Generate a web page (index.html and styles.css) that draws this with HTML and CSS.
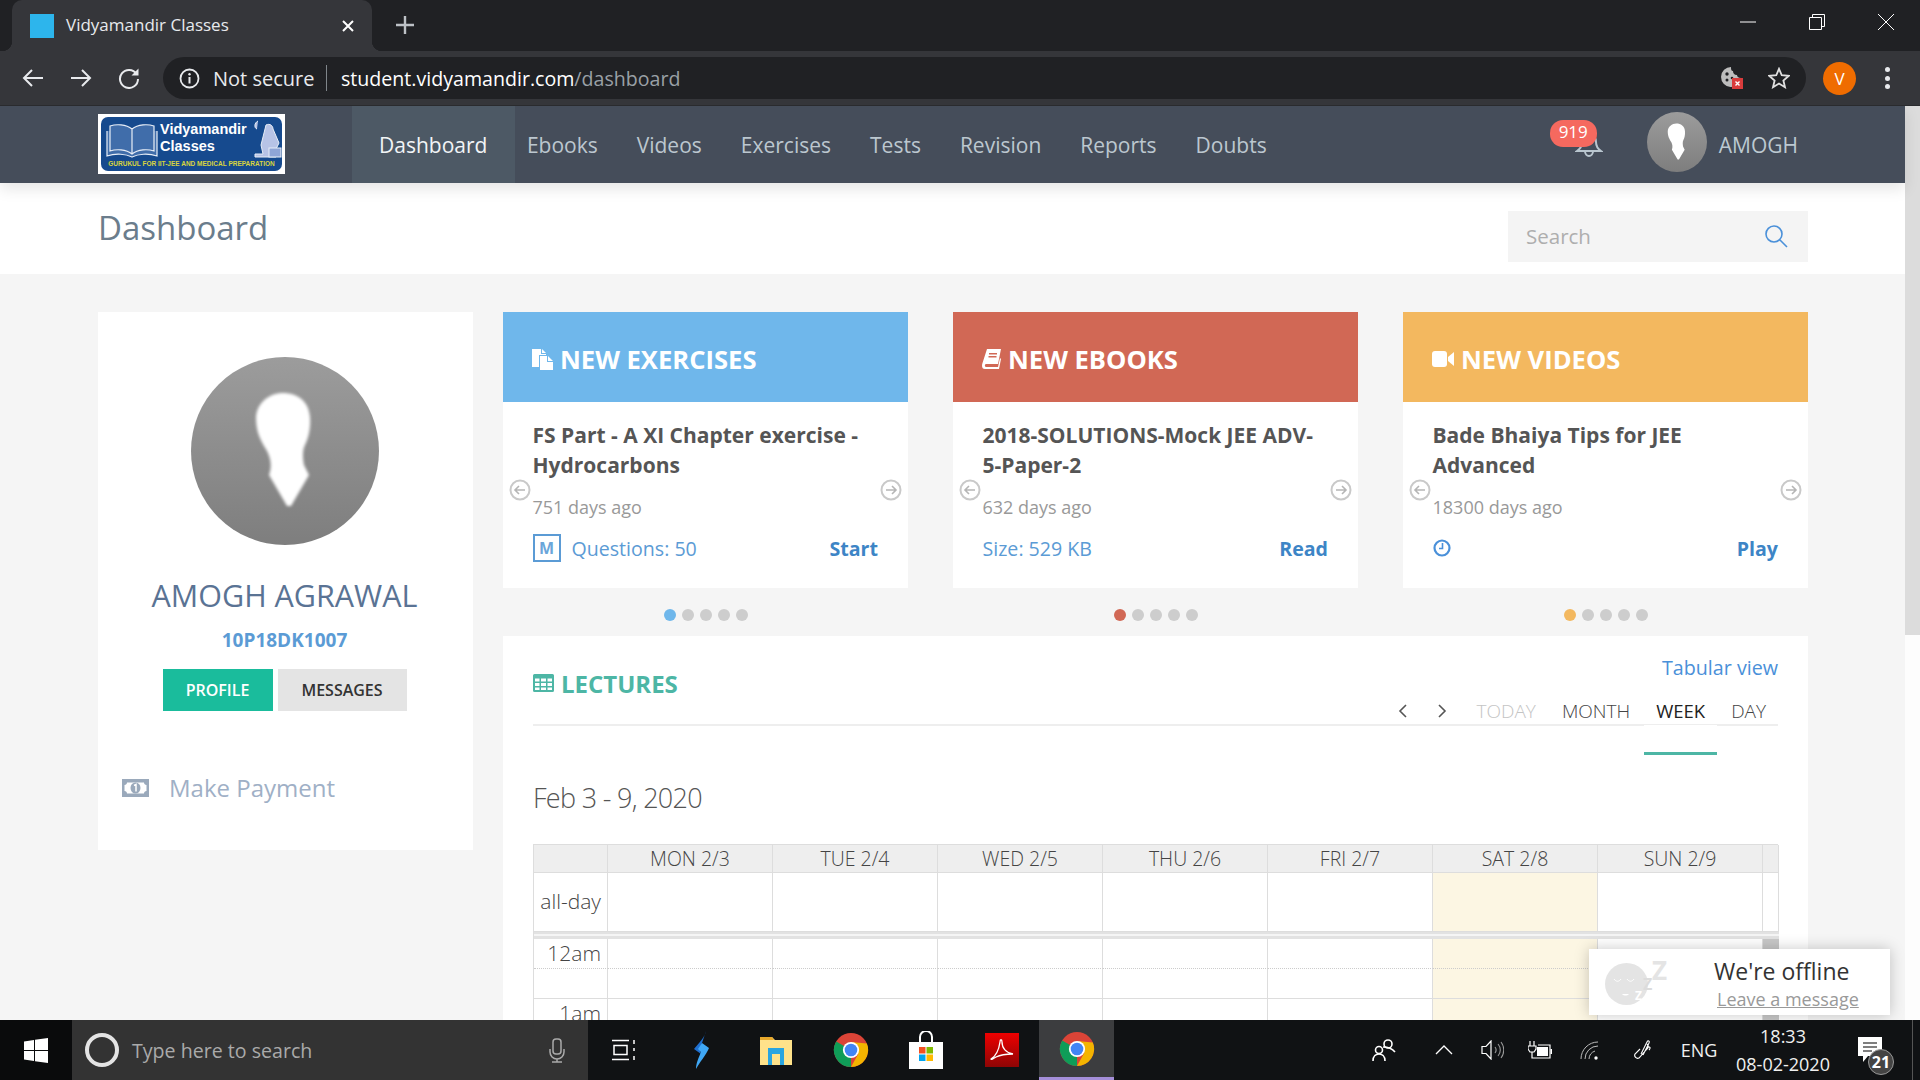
FILE: index.html
```html
<!DOCTYPE html>
<html lang="en">
<head>
<meta charset="utf-8">
<title>Vidyamandir Classes</title>
<link rel="stylesheet" href="styles.css">
</head>
<body>
<svg class="defs" width="0" height="0" aria-hidden="true">
  <symbol id="chrome" viewBox="0 0 40 40">
    <circle cx="20" cy="20" r="19" fill="#db4437"/>
    <path d="M20 20 L3.55 29.5 A19 19 0 0 0 20 39 Z" fill="#0f9d58"/>
    <path d="M3.55 10.5 A19 19 0 0 0 3.55 29.5 L13 31.5 L20 20 Z" fill="#0f9d58"/>
    <path d="M20 11 L37.6 12.8 A19 19 0 0 1 20 39 L28 24.5 Z" fill="#f4b400"/>
    <circle cx="20" cy="20" r="9" fill="#fff"/>
    <circle cx="20" cy="20" r="7" fill="#4285f4"/>
  </symbol>
  <symbol id="person" viewBox="0 0 188 188">
    <defs>
      <linearGradient id="pg" x1="0" y1="0" x2="0" y2="1"><stop offset="0" stop-color="#9c9c9c"/><stop offset="1" stop-color="#7e7e7e"/></linearGradient>
      <filter id="pb"><feGaussianBlur stdDeviation="1.4"/></filter>
    </defs>
    <circle cx="94" cy="94" r="94" fill="url(#pg)"/>
    <path filter="url(#pb)" fill="#fff" d="M92 36C106 36 118 44 119 60C120 72 117 82 114 88C111 94 112 102 113 108L118 118L100 149L96 149L78 118C81 110 80 102 76 94C70 84 65 76 65 60C66 46 78 36 92 36Z"/>
  </symbol>
  <symbol id="arrow-l" viewBox="0 0 22 22">
    <circle cx="11" cy="11" r="9.5" fill="#fff" stroke="#c9c9c9" stroke-width="2"/>
    <path d="M16 11H6M10 7l-4 4 4 4" fill="none" stroke="#b5b5b5" stroke-width="1.6"/>
  </symbol>
  <symbol id="arrow-r" viewBox="0 0 22 22">
    <circle cx="11" cy="11" r="9.5" fill="#fff" stroke="#c9c9c9" stroke-width="2"/>
    <path d="M6 11h10M12 7l4 4-4 4" fill="none" stroke="#b5b5b5" stroke-width="1.6"/>
  </symbol>
</svg>

<div class="screen">
  <div class="tabstrip">
    <div class="tab">
      <span class="favicon"></span>
      <span class="tab-title">Vidyamandir Classes</span>
      <svg class="tab-x" width="12" height="12" viewBox="0 0 12 12"><path d="M1 1l10 10M11 1L1 11" stroke="#fff" stroke-width="2"/></svg>
    </div>
    <svg class="tab-plus" width="18" height="18" viewBox="0 0 18 18"><path d="M9 0v18M0 9h18" stroke="#bdc1c6" stroke-width="2.4"/></svg>
    <div class="winctl">
      <span class="winbtn"><svg width="16" height="16" viewBox="0 0 16 16"><path d="M0 8h16" stroke="#fff" stroke-width="1"/></svg></span>
      <span class="winbtn"><svg width="16" height="16" viewBox="0 0 16 16"><path d="M.5 3.5h12v12H.5zM3.5 3.5V.5h12v12h-3" fill="none" stroke="#fff"/></svg></span>
      <span class="winbtn"><svg width="16" height="16" viewBox="0 0 16 16"><path d="M0 0l16 16M16 0L0 16" stroke="#fff" stroke-width="1"/></svg></span>
    </div>
  </div>

  <div class="toolbar">
    <span class="tool"><svg width="22" height="22" viewBox="0 0 22 22"><path d="M21 11H2M10 3l-8 8 8 8" fill="none" stroke="#e8eaed" stroke-width="2"/></svg></span>
    <span class="tool"><svg width="22" height="22" viewBox="0 0 22 22"><path d="M1 11h19M12 3l8 8-8 8" fill="none" stroke="#e8eaed" stroke-width="2"/></svg></span>
    <span class="tool"><svg width="22" height="22" viewBox="0 0 22 22"><path d="M18.5 7A9 9 0 1 0 20 12" fill="none" stroke="#e8eaed" stroke-width="2"/><path d="M20.5 1.5v7h-7z" fill="#e8eaed"/></svg></span>
    <div class="omnibox">
      <svg class="omni-info" width="21" height="21" viewBox="0 0 21 21"><circle cx="10.5" cy="10.5" r="9" fill="none" stroke="#e8eaed" stroke-width="1.8"/><path d="M10.5 9v6.5" stroke="#e8eaed" stroke-width="2"/><circle cx="10.5" cy="6.2" r="1.2" fill="#e8eaed"/></svg>
      <span class="omni-sec">Not secure</span>
      <span class="omni-sep"></span>
      <span class="omni-url">student.vidyamandir.com<span class="omni-path">/dashboard</span></span>
      <span class="omni-right">
        <svg width="22" height="24" viewBox="0 0 22 24"><path d="M10 1a10 10 0 1 0 10 11c-3 0-4-2-4-3-3 0-4-2-4-4-2 0-2-2-2-4z" fill="#bdbdbd"/><circle cx="6" cy="8" r="1.7" fill="#202124"/><circle cx="6" cy="14" r="1.5" fill="#202124"/><circle cx="11" cy="12" r="1.3" fill="#202124"/><rect x="11" y="12" width="11" height="11" fill="#d93c3c"/><path d="M14.5 15.5l4 4M18.5 15.5l-4 4" stroke="#fff" stroke-width="1.4"/></svg>
        <svg width="22" height="22" viewBox="0 0 24 24"><path d="M12 2l3 7 7.500.7-5.700 5 1.700 7.300L12 18l-6.500 4 1.700-7.300-5.700-5L9 9z" fill="none" stroke="#e0e0e0" stroke-width="2"/></svg>
      </span>
    </div>
    <span class="profile-v">V</span>
    <span class="menu-dots"><i></i><i></i><i></i></span>
  </div>

  <div class="viewport">
    <div class="page">
      <nav class="nav">
        <div class="logo">
          <div class="logo-in">
            <svg class="logo-book" width="52" height="36" viewBox="0 0 52 36"><path d="M26 6C20 1 10 1 4 3V28C10 26 20 26 26 31C32 26 42 26 48 28V3C42 1 32 1 26 6ZM26 6V31M1 8V33C10 30 20 31 26 34C32 31 42 30 51 33V8" fill="#5d86bd" fill-opacity=".6" stroke="#e8eef7" stroke-width="1.2"/></svg>
            <div class="logo-words"><span>Vidyamandir</span><span>Classes</span></div>
            <svg class="logo-man" width="30" height="40" viewBox="0 0 30 40"><path d="M6 2C2 4 2 9 5 10M14 6c4-2 7 1 7 4l6 14-3 6v8H3v-3h8l-2-9z" fill="#b7c3e6" stroke="#e8eef7"/><rect x="17" y="29" width="12" height="9" fill="#8fa5d6" stroke="#e8eef7"/></svg>
            <div class="logo-tag">GURUKUL FOR IIT-JEE AND MEDICAL PREPARATION</div>
          </div>
        </div>
        <a class="nav-item active">Dashboard</a>
        <a class="nav-item after-active">Ebooks</a>
        <a class="nav-item">Videos</a>
        <a class="nav-item">Exercises</a>
        <a class="nav-item">Tests</a>
        <a class="nav-item">Revision</a>
        <a class="nav-item">Reports</a>
        <a class="nav-item">Doubts</a>
        <div class="nav-user">
          <div class="bell">
            <svg width="28" height="24" viewBox="0 0 28 24"><path d="M14 1c5 0 7 4 7 8 0 5 2 7 5 9H2c3-2 5-4 5-9 0-4 2-8 7-8zM10 18c0 3 2 5 4 5s4-2 4-5" fill="none" stroke="#b9c6cf" stroke-width="2"/></svg>
            <span class="badge">919</span>
          </div>
          <svg class="nav-avatar" width="60" height="60"><use href="#person"/></svg>
          <span class="nav-name">AMOGH</span>
        </div>
      </nav>

      <header class="titlebar">
        <h1 class="page-title">Dashboard</h1>
        <div class="search">
          <span>Search</span>
          <svg width="24" height="24" viewBox="0 0 24 24"><circle cx="10" cy="10" r="8" fill="none" stroke="#4a90d9" stroke-width="1.6"/><path d="M16 16l7 7" stroke="#4a90d9" stroke-width="1.6"/></svg>
        </div>
      </header>

      <div class="content">
        <aside class="profile">
          <svg class="avatar" width="188" height="188"><use href="#person"/></svg>
          <div class="name">AMOGH AGRAWAL</div>
          <div class="roll">10P18DK1007</div>
          <div class="btns"><a class="btn btn-green">PROFILE</a><a class="btn btn-grey">MESSAGES</a></div>
          <div class="pay">
            <svg width="27" height="18" viewBox="0 0 27 18"><path fill-rule="evenodd" d="M0 0h27v18H0zM5 3.500C5 5 4 6 2.500 6v6C4 12 5 13 5 14.500h17c0-1.500 1-2.500 2.500-2.500V6C23 6 22 5 22 3.500z" fill="#9aa9bb"/><ellipse cx="13.500" cy="9" rx="5" ry="5.500" fill="#9aa9bb"/><path d="M12 6.500l2-1v7" fill="none" stroke="#fff" stroke-width="1.500"/></svg>
            <span>Make Payment</span>
          </div>
        </aside>

        <main class="main">
          <div class="cards">
            <section class="slider">
              <div class="card">
                <div class="card-head blue">
                  <svg width="21" height="22" viewBox="0 0 21 22"><path d="M0 1h9v5h5v1H7v12H0zM10 1l4 4h-4zM8 8h7v6h6v8H8zM16 8l5 5h-5z" fill="#fff"/></svg>
                  <span>NEW EXERCISES</span>
                </div>
                <div class="card-body">
                  <h3>FS Part - A XI Chapter exercise - Hydrocarbons</h3>
                  <p class="age">751 days ago</p>
                  <div class="card-foot">
                    <span class="foot-left"><span class="mbox">M</span>Questions: 50</span>
                    <a class="action">Start</a>
                  </div>
                  <svg class="arr arr-l" width="22" height="22"><use href="#arrow-l"/></svg>
                  <svg class="arr arr-r" width="22" height="22"><use href="#arrow-r"/></svg>
                </div>
              </div>
              <div class="dots dots-blue"><i></i><i></i><i></i><i></i><i></i></div>
            </section>

            <section class="slider">
              <div class="card">
                <div class="card-head red">
                  <svg width="19" height="20" viewBox="0 0 19 20"><path d="M5 0h14l-3 15H4c-1.500 0-1.500 3 0 3h12l2-9 1 1-2 10H3C0 20-.5 17 .5 14zM7 4v1.500h8V4zM6.500 7v1.500h8V7z" fill="#fff" fill-rule="evenodd"/></svg>
                  <span>NEW EBOOKS</span>
                </div>
                <div class="card-body">
                  <h3>2018-SOLUTIONS-Mock JEE ADV-5-Paper-2</h3>
                  <p class="age">632 days ago</p>
                  <div class="card-foot">
                    <span class="foot-left">Size: 529 KB</span>
                    <a class="action">Read</a>
                  </div>
                  <svg class="arr arr-l" width="22" height="22"><use href="#arrow-l"/></svg>
                  <svg class="arr arr-r" width="22" height="22"><use href="#arrow-r"/></svg>
                </div>
              </div>
              <div class="dots dots-red"><i></i><i></i><i></i><i></i><i></i></div>
            </section>

            <section class="slider">
              <div class="card">
                <div class="card-head amber">
                  <svg width="22" height="16" viewBox="0 0 22 16"><rect width="15" height="16" rx="3" fill="#fff"/><path d="M16 6l6-5v14l-6-5z" fill="#fff"/></svg>
                  <span>NEW VIDEOS</span>
                </div>
                <div class="card-body">
                  <h3>Bade Bhaiya Tips for JEE Advanced</h3>
                  <p class="age">18300 days ago</p>
                  <div class="card-foot">
                    <span class="foot-left"><svg width="18" height="18" viewBox="0 0 18 18"><circle cx="9" cy="9" r="7.500" fill="none" stroke="#4a90d9" stroke-width="2.200"/><path d="M9.500 4v5.500H6" fill="none" stroke="#4a90d9" stroke-width="1.600"/></svg></span>
                    <a class="action">Play</a>
                  </div>
                  <svg class="arr arr-l" width="22" height="22"><use href="#arrow-l"/></svg>
                  <svg class="arr arr-r" width="22" height="22"><use href="#arrow-r"/></svg>
                </div>
              </div>
              <div class="dots dots-amber"><i></i><i></i><i></i><i></i><i></i></div>
            </section>
          </div>

          <section class="lectures">
            <div class="lect-head">
              <div class="lect-title">
                <svg width="21" height="18" viewBox="0 0 21 18"><path fill-rule="evenodd" d="M1.500 0h18A1.500 1.500 0 0 1 21 1.500v15a1.500 1.500 0 0 1-1.500 1.500h-18A1.500 1.500 0 0 1 0 16.500v-15A1.500 1.500 0 0 1 1.500 0zM2 4.500v3h4.500v-3zM8 4.500v3h5v-3zM14.500 4.500v3H19v-3zM2 9v3h4.500V9zM8 9v3h5V9zM14.500 9v3H19V9zM2 13.500V16h4.500v-2.500zM8 13.500V16h5v-2.500zM14.500 13.500V16H19v-2.500z" fill="#4db6a5"/></svg>
                <span>LECTURES</span>
              </div>
              <div class="lect-right">
                <a class="tabular">Tabular view</a>
                <div class="cal-tools">
                  <svg class="chev" width="10" height="14" viewBox="0 0 10 14"><path d="M8 1L2 7l6 6" fill="none" stroke="#555" stroke-width="1.600"/></svg>
                  <svg class="chev chev-next" width="10" height="14" viewBox="0 0 10 14"><path d="M2 1l6 6-6 6" fill="none" stroke="#555" stroke-width="1.600"/></svg>
                  <span class="ct today">TODAY</span>
                  <span class="ct month">MONTH</span>
                  <span class="ct week">WEEK</span>
                  <span class="ct day">DAY</span>
                </div>
              </div>
            </div>
            <h2 class="range">Feb 3 - 9, 2020</h2>
            <div class="cal">
              <div class="c hd"></div><div class="c hd">MON 2/3</div><div class="c hd">TUE 2/4</div><div class="c hd">WED 2/5</div><div class="c hd">THU 2/6</div><div class="c hd">FRI 2/7</div><div class="c hd">SAT 2/8</div><div class="c hd">SUN 2/9</div><div class="c hd"></div>
              <div class="c ad ax">all-day</div><div class="c ad"></div><div class="c ad"></div><div class="c ad"></div><div class="c ad"></div><div class="c ad"></div><div class="c ad sat"></div><div class="c ad"></div><div class="c ad gut"></div>
              <div class="divider"></div>
              <div class="c dot ax">12am</div><div class="c dot"></div><div class="c dot"></div><div class="c dot"></div><div class="c dot"></div><div class="c dot"></div><div class="c dot sat"></div><div class="c dot"></div><div class="c thumb"></div>
              <div class="c ax"></div><div class="c"></div><div class="c"></div><div class="c"></div><div class="c"></div><div class="c"></div><div class="c sat"></div><div class="c"></div><div class="c thumb"></div>
              <div class="c dot ax">1am</div><div class="c dot"></div><div class="c dot"></div><div class="c dot"></div><div class="c dot"></div><div class="c dot"></div><div class="c dot sat"></div><div class="c dot"></div><div class="c thumb"></div>
            </div>
          </section>
        </main>
      </div>
    </div>
    <div class="scrollbar"><div class="scroll-thumb"></div></div>

    <div class="chat">
      <svg class="chat-face" width="68" height="60" viewBox="0 0 68 60"><ellipse cx="21.500" cy="32" rx="21.500" ry="21" fill="#e4e4e4"/><path d="M9 27c2 3 5 3 7 0M22 27c2 3 5 3 7 0" fill="none" stroke="#fff"/><path d="M17 42c2 2 5 2 7 0z" fill="#fff"/><text x="47" y="27.500" class="zz1">Z</text><text x="38" y="38" class="zz2">Z</text><text x="30" y="48" class="zz3">Z</text></svg>
      <div class="chat-text">
        <div class="chat-t">We're offline</div>
        <a class="chat-l">Leave a message</a>
      </div>
    </div>
  </div>

  <div class="taskbar">
    <div class="start"><svg width="24" height="25" viewBox="0 0 24 25"><path d="M0 3.500L10 2v10H0zM11 1.800L24 0v12H11zM0 13h10v10L0 21.500zM11 13h13v12l-13-1.800z" fill="#fff"/></svg></div>
    <div class="tb-search">
      <span class="cortana"></span>
      <span class="tb-placeholder">Type here to search</span>
      <svg class="tb-mic" width="16" height="25" viewBox="0 0 16 25"><rect x="4" y="1" width="8" height="15" rx="3" fill="none" stroke="#aaa" stroke-width="1.500"/><path d="M1 11v3a7 7 0 0 0 14 0v-3M8 21v3M3 24h10" fill="none" stroke="#aaa" stroke-width="1.500"/></svg>
    </div>
    <span class="slot slot-view"><svg width="24" height="24" viewBox="0 0 24 24"><path d="M0 2.500h17M0 21.500h17M2 7.500h13v9H2zM22 2v4M22 10v3M22 18v4" fill="none" stroke="#fff" stroke-width="1.500"/></svg></span>
    <span class="slot"><svg width="20" height="38" viewBox="0 0 20 38"><path d="M15 0C14 6 8 12 3 18l7 5-1-5z" fill="#1f6fd0"/><path d="M11 12l7 5C15 24 8 32 5 38c0-6 3-12 5-17l-3-3z" fill="#3fa7f5"/></svg></span>
    <span class="slot"><svg width="32" height="30" viewBox="0 0 32 30"><path d="M0 2h12l3 3h17v25H0z" fill="#ffe28a"/><path d="M0 2h12l2 3H0z" fill="#e8a92c"/><path d="M8 13h16v17H8z" fill="#2aa5e0"/><path d="M12 19h8v11h-8z" fill="#ffe28a"/></svg></span>
    <span class="slot"><svg width="36" height="36"><use href="#chrome"/></svg></span>
    <span class="slot"><svg width="36" height="38" viewBox="0 0 36 38"><path d="M12 12V6a6 6 0 0 1 12 0v6" fill="none" stroke="#fff" stroke-width="2"/><path d="M1 11h34v27H1z" fill="#fff"/><path d="M11 16h6.500v6.500H11z" fill="#f25022"/><path d="M18.500 16H25v6.500h-6.500z" fill="#7fba00"/><path d="M11 23.500h6.500V30H11z" fill="#00a4ef"/><path d="M18.500 23.500H25V30h-6.500z" fill="#ffb900"/></svg></span>
    <span class="slot"><svg width="34" height="34" viewBox="0 0 34 34"><defs><linearGradient id="ar" x1="0" y1="0" x2="0" y2="1"><stop offset="0" stop-color="#ee0000"/><stop offset="1" stop-color="#8e0505"/></linearGradient></defs><rect width="34" height="34" fill="url(#ar)"/><path d="M6 26c5-3 8-10 9-17 0-3 2-3 2 0 0 6 4 11 11 12-6 0-13 1-17 3-3 2-5 3-5 2z" fill="none" stroke="#fff" stroke-width="1.300"/></svg></span>
    <span class="slot slot-active"><svg width="36" height="36"><use href="#chrome"/></svg></span>
    <div class="tray">
      <span class="ti ti-people"><svg width="24" height="24" viewBox="0 0 24 24"><circle cx="16" cy="6" r="4" fill="none" stroke="#fff" stroke-width="1.600"/><circle cx="7" cy="12" r="3.500" fill="none" stroke="#fff" stroke-width="1.600"/><path d="M11 9c1 0 8 0 12 5M1 23c0-5 3-7 6-7s6 2 6 7" fill="none" stroke="#fff" stroke-width="1.600"/></svg></span>
      <span class="ti ti-chev"><svg width="18" height="10" viewBox="0 0 18 10"><path d="M1 9l8-8 8 8" fill="none" stroke="#fff" stroke-width="1.300"/></svg></span>
      <span class="ti ti-sound"><svg width="23" height="20" viewBox="0 0 23 20"><path d="M1 6.500h4L10 1v18l-5-5.500H1z" fill="none" stroke="#fff" stroke-width="1.200"/><path d="M14 7a5 5 0 0 1 0 6M17 4a9 9 0 0 1 0 12M20 2a13 13 0 0 1 0 16" fill="none" stroke="#999" stroke-width="1.100"/></svg></span>
      <span class="ti ti-batt"><svg width="24" height="18" viewBox="0 0 24 18"><path d="M2 0v5M6 0v5M0 5h8v3l-2 3H2L0 8zM4 11v6h18V4H10" fill="none" stroke="#fff" stroke-width="1.200"/><rect x="9" y="6" width="11" height="9" fill="#fff"/><rect x="22.500" y="8" width="1.500" height="5" fill="#fff"/></svg></span>
      <span class="ti ti-wifi"><svg width="20" height="20" viewBox="0 0 20 20"><path d="M1 19A17 17 0 0 1 18 2M5 19A13 13 0 0 1 18 6M9 19a9 9 0 0 1 6-8" fill="none" stroke="#bbb" stroke-width="1"/><circle cx="16" cy="18" r="1.700" fill="#fff"/></svg></span>
      <span class="ti ti-pen"><svg width="20" height="20" viewBox="0 0 20 20"><path d="M8 9l-5 5a3 3 0 0 0 4 4l8-9c2-2 1-4 0-5M9 14L15 2c1-2 3-1 2 1L11 15M15 7c3-1 4 1 2 3" fill="none" stroke="#fff" stroke-width="1.100"/></svg></span>
      <span class="ti ti-lang">ENG</span>
      <span class="ti ti-clock"><span>18:33</span><span>08-02-2020</span></span>
      <span class="ti ti-notif">
        <svg width="24" height="26" viewBox="0 0 24 26"><path d="M0 0h24v19H10l-5 6v-6H0z" fill="#fff"/><path d="M5 6h14M5 10h14M5 14h9" stroke="#555" stroke-width="1.500"/></svg>
        <b class="notif-count">21</b>
      </span>
      <span class="desk-line"></span>
    </div>
  </div>
</div>
</body>
</html>
```

FILE: styles.css
```css
* { box-sizing: border-box; }
html, body { margin: 0; padding: 0; }
body { font-family: "Open Sans", "Noto Sans", sans-serif; background: #202124; overflow: hidden; }
a { text-decoration: none; }
h1, h2, h3, p { margin: 0; font-weight: inherit; }
i { font-style: normal; }
svg { display: block; flex: none; }
.defs { position: absolute; }

.screen { width: 1920px; height: 1080px; display: flex; flex-direction: column; overflow: hidden; }

/* Browser chrome */
.tabstrip { height: 51px; flex: none; background: #202124; display: flex; align-items: stretch; color: #e8eaed; }
.tab { position: relative; width: 360px; margin-left: 12px; background: #35363a; border-radius: 10px 10px 0 0; display: flex; align-items: center; padding: 0 18px; }
.tab::before, .tab::after { content: ""; position: absolute; bottom: 0; width: 10px; height: 10px; }
.tab::before { left: -10px; background: radial-gradient(circle at 0 0, transparent 10px, #35363a 10.5px); }
.tab::after { right: -10px; background: radial-gradient(circle at 100% 0, transparent 10px, #35363a 10.5px); }
.favicon { width: 24px; height: 24px; background: #2db5ec; flex: none; }
.tab-title { margin-left: 12px; margin-top: -2px; font-size: 17px; color: #e8eaed; white-space: nowrap; }
.tab-x { margin-left: auto; margin-right: 0; }
.tab-plus { align-self: center; margin-left: 24px; margin-top: -2px; }
.winctl { margin-left: auto; display: flex; }
.winbtn { width: 69px; display: flex; align-items: center; justify-content: center; padding-bottom: 8px; }

.toolbar { height: 55px; flex: none; background: #35363a; border-bottom: 1px solid #2a2b2e; display: flex; align-items: center; padding-left: 9px; }
.tool { width: 48px; display: flex; justify-content: center; }
.omnibox { width: 1643px; height: 42px; margin-left: 10px; border-radius: 21px; background: #202124; display: flex; align-items: center; padding: 0 16px; font-size: 20px; }
.omni-info { margin-right: 13px; }
.omni-sec { color: #e8eaed; white-space: nowrap; width: 101px; }
.omni-sep { width: 1px; height: 26px; background: #80868b; margin: 0 14px 0 12px; }
.omni-url { color: #fff; white-space: nowrap; font-size: 19.600px; }
.omni-path { color: #9aa0a6; }
.omni-right { margin-left: auto; display: flex; align-items: center; gap: 25px; }
.profile-v { width: 33px; height: 33px; border-radius: 50%; background: #ef6c00; color: #fff; font-size: 17px; display: flex; align-items: center; justify-content: center; margin-left: 17px; }
.menu-dots { display: flex; flex-direction: column; gap: 3.500px; margin-left: 29px; }
.menu-dots i { width: 5px; height: 5px; border-radius: 50%; background: #e8eaed; }

/* Viewport */
.viewport { position: relative; flex: 1; min-height: 0; display: flex; overflow: hidden; background: #f5f5f5; }
.page { width: 1905px; flex: none; display: flex; flex-direction: column; }
.scrollbar { flex: 1; background: #fdfdfd; }
.scroll-thumb { height: 529px; background: #dcdcdc; }

/* Nav */
.nav { position: relative; z-index: 2; height: 77px; flex: none; background: #454d5a; display: flex; align-items: stretch; padding: 0 107px 0 98px; font-size: 21px; box-shadow: 0 6px 14px rgba(0, 0, 0, .10); }
.logo { width: 187px; height: 60px; margin: 8px 67px 0 0; background: #fff; padding: 3px; }
.logo-in { height: 100%; background: #164a8e; border-radius: 7px; display: grid; grid-template-columns: 59px 91px 1fr; grid-template-rows: 41px 1fr; color: #fff; }
.logo-book { margin: 6px 0 0 5px; }
.logo-words { display: flex; flex-direction: column; font: bold 14.500px/17px "Liberation Sans", sans-serif; padding-top: 4px; }
.logo-man { margin-top: 2px; margin-left: 1px; }
.logo-tag { grid-column: 1 / -1; font: bold 6.500px/12px "Liberation Sans", sans-serif; color: #d9d53e; text-align: center; white-space: nowrap; }
.nav-item { display: flex; align-items: center; padding: 0 19.500px; color: #bcc7cf; white-space: nowrap; }
.nav-item.active { background: #4d5965; color: #f1f4f6; padding: 0 27.500px 0 27px; }
.nav-item.after-active { padding-left: 12px; }
.nav-user { margin-left: auto; display: flex; align-items: center; color: #bcc9d1; }
.bell { position: relative; margin-right: 44px; }
.badge { position: absolute; top: -13px; left: -25px; width: 47px; height: 27px; border-radius: 13px; background: #f5695f; color: #fff; font-size: 17px; line-height: 24px; text-align: center; }
.nav-avatar { margin-top: -5px; }
.nav-name { margin-left: 12px; }

/* Title */
.titlebar { height: 91px; flex: none; background: #fff; display: flex; justify-content: space-between; padding: 0 97px 0 98px; }
.page-title { font-size: 33px; line-height: 44px; margin-top: 23px; color: #6b7d8c; }
.search { width: 300px; height: 51px; margin-top: 28px; background: #f4f4f4; display: flex; align-items: center; justify-content: space-between; padding: 0 20px 2px 18px; color: #aeaeae; font-size: 20.500px; }

/* Content grid */
.content { flex: 1; min-height: 0; display: grid; grid-template-columns: 375px 1305px; column-gap: 30px; padding: 38px 0 0 98px; align-items: start; }

.profile { height: 538px; background: #fff; display: flex; flex-direction: column; align-items: center; padding: 45px 2px 0 0; }
.avatar { flex: none; }
.name { margin-top: 31px; font-size: 30.500px; line-height: 38px; font-weight: 500; color: #5a7394; white-space: nowrap; }
.roll { margin-top: 13px; font-size: 19px; line-height: 26px; font-weight: 700; color: #5b9bd5; }
.btns { margin-top: 16px; display: flex; gap: 5px; }
.btn { height: 42px; display: flex; align-items: center; justify-content: center; font-size: 16px; font-weight: 600; }
.btn-green { width: 110px; background: #1abc9c; color: #fff; }
.btn-grey { width: 129px; background: #e4e4e4; color: #333; }
.pay { align-self: stretch; margin-top: 60px; padding-left: 24px; display: flex; align-items: center; gap: 20px; font-size: 24px; line-height: 34px; color: #9fb0c6; }

/* Cards */
.main { min-width: 0; }
.cards { display: flex; gap: 45px; }
.slider { width: 405px; }
.card { height: 276px; background: #fff; display: flex; flex-direction: column; }
.card-head { height: 90px; flex: none; display: flex; align-items: center; gap: 7px; padding: 4px 0 0 29px; color: #fff; font-size: 25.600px; font-weight: 700; white-space: nowrap; }
.blue { background: #6fb7eb; }
.red { background: #d16855; }
.amber { background: #f3b85f; }
.card-body { position: relative; flex: 1; padding: 18px 30px 0 29.500px; }
.card-body h3 { font-size: 21px; line-height: 30px; font-weight: 700; color: #555; }
.age { margin-top: 14px; font-size: 18px; line-height: 26px; color: #999; }
.card-foot { margin-top: 14px; height: 28px; display: flex; align-items: center; justify-content: space-between; font-size: 19.600px; }
.foot-left { display: flex; align-items: center; color: #5b9bd5; white-space: nowrap; }
.mbox { width: 28px; height: 28px; margin-right: 11px; border: 2px solid #5b9bd5; color: #6ba6da; font-size: 16px; font-weight: 700; line-height: 24px; text-align: center; }
.action { color: #3d85c6; font-weight: 700; }
.arr { position: absolute; top: 77px; }
.arr-l { left: 6px; }
.arr-r { right: 6px; }
.dots { margin-top: 21px; height: 12px; display: flex; justify-content: center; gap: 6px; }
.dots i { width: 12px; height: 12px; border-radius: 50%; background: #cdcdcd; }
.dots-blue i:first-child { background: #6fb7eb; }
.dots-red i:first-child { background: #d16855; }
.dots-amber i:first-child { background: #f3b85f; }

/* Lectures */
.lectures { margin-top: 15px; background: #fff; padding: 18px 30px 0; height: 500px; }
.lect-head { display: flex; justify-content: space-between; border-bottom: 2px solid #eee; height: 72px; }
.lect-title { display: flex; align-items: center; gap: 7px; height: 32px; margin-top: 13px; color: #4db6a5; font-size: 24px; font-weight: 700; }
.lect-right { display: flex; flex-direction: column; align-items: flex-end; }
.tabular { font-size: 19.700px; line-height: 28px; color: #4a90d9; }
.cal-tools { margin-top: 15px; height: 28px; display: flex; align-items: center; font-size: 19px; font-weight: 300; color: #444; }
.chev-next { margin-left: 29px; }
.ct { white-space: nowrap; }
.today { margin-left: 30px; color: #c4c4c4; }
.month { margin-left: 26px; }
.week { position: relative; margin-left: 26px; color: #222; font-size: 18.500px; font-weight: 400; }
.week::before { content: ""; position: absolute; left: -12px; right: -12px; top: 27px; height: 2px; background: #fff; }
.week::after { content: ""; position: absolute; left: -12px; right: -12px; top: 54px; height: 3px; background: #4db6a5; }
.day { margin-left: 26px; margin-right: 12px; }
.range { margin-top: 52px; font-size: 27px; line-height: 40px; font-weight: 300; letter-spacing: -.7px; color: #555; }
.cal { margin-top: 26px; display: grid; grid-template-columns: 74px repeat(7, 165px) 16px; grid-template-rows: 28px 59px 7px 30px 30px 30px; border-top: 1px solid #ddd; border-left: 1px solid #ddd; }
.c { border-right: 1px solid #ddd; border-bottom: 1px solid #ddd; }
.hd { background: #eee; font-size: 19.500px; line-height: 27px; font-weight: 300; color: #444; text-align: center; white-space: nowrap; }
.ax { font-size: 21px; font-weight: 300; line-height: 28px; color: #444; text-align: right; padding-right: 6px; }
.ad.ax { line-height: 56px; }
.dot { border-bottom: 1px dotted #ccc; }
.sat { background: #fcf6e3; }
.gut { border-right: 1px solid #ddd; }
.divider { grid-column: 1 / -1; background: #f5f5f5; border-top: 2px solid #e2e2e2; border-bottom: 3px solid #e2e2e2; }
.thumb { background: #c8c8c8; border: 0; }

/* Chat */
.chat { position: absolute; left: 1589px; top: 843px; width: 301px; height: 66px; background: #fff; box-shadow: 0 0 14px rgba(0, 0, 0, .22); display: flex; z-index: 3; }
.chat-face { margin: 3px 0 0 16px; }
.zz1 { font: bold 26px/1 "Open Sans", sans-serif; fill: #e4e4e4; }
.zz2 { font: bold 16px/1 "Open Sans", sans-serif; fill: #dcdcdc; }
.zz3 { font: bold 12px/1 "Open Sans", sans-serif; fill: #fff; }
.chat-text { margin-left: 41px; text-align: left; }
.chat-t { font-size: 23px; line-height: 32px; margin-top: 6px; color: #333; white-space: nowrap; }
.chat-l { display: block; margin-left: 3px; font-size: 18px; line-height: 24px; color: #999; text-decoration: underline; white-space: nowrap; }

/* Taskbar */
.taskbar { height: 60px; flex: none; background: #101214; display: flex; align-items: stretch; color: #fff; }
.start { width: 72px; display: flex; align-items: center; justify-content: center; background: #0a0b0c; }
.tb-search { width: 516px; background: #333; display: flex; align-items: center; padding-left: 13px; }
.cortana { width: 34px; height: 34px; border-radius: 50%; border: 4px solid #e4e4e4; flex: none; }
.tb-placeholder { margin-left: 13px; font-size: 19.600px; color: #aaa; white-space: nowrap; }
.tb-mic { margin-left: auto; margin-right: 23px; }
.slot { width: 75.200px; display: flex; align-items: center; justify-content: center; flex: none; }
.slot-view { padding-right: 4px; }
.slot-active { background: #3c3d3f; border-bottom: 3px solid #a58fd9; }
.tray { margin-left: auto; display: flex; align-items: center; width: 566px; }
.ti { display: flex; align-items: center; justify-content: center; flex: none; font-size: 18px; color: #f0f0f0; }
.ti-people, .ti-chev, .ti-batt { width: 60px; }
.ti-sound { width: 36px; }
.ti-wifi { width: 40px; }
.ti-pen { width: 64px; }
.ti-lang { width: 50px; }
.ti-clock { width: 118px; flex-direction: column; line-height: 28px; }
.ti-notif { position: relative; width: 56px; }
.notif-count { position: absolute; left: 26px; top: 12px; width: 26px; height: 26px; border-radius: 50%; background: #444; border: 1px solid #999; color: #fff; font-size: 16px; line-height: 24px; text-align: center; }
.desk-line { width: 1px; height: 60px; margin-left: 14px; background: #555; }
```
